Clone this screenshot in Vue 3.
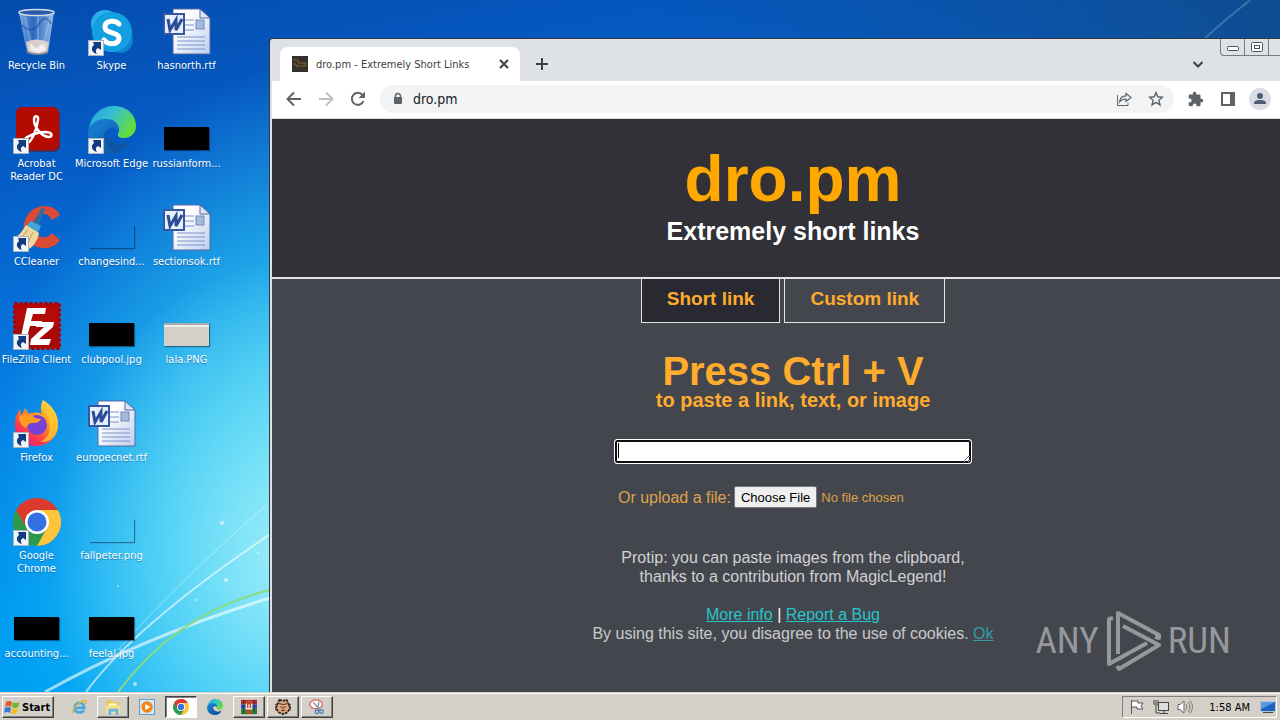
<script setup>
import { ref } from 'vue';

const shortcuts = [
  { label: 'Recycle Bin', icon: 'bin' },
  { label: 'Acrobat Reader DC', icon: 'acrobat', link: true },
  { label: 'CCleaner', icon: 'ccleaner', link: true },
  { label: 'FileZilla Client', icon: 'filezilla', link: true },
  { label: 'Firefox', icon: 'firefox', link: true },
  { label: 'Google Chrome', icon: 'chrome', link: true },
  { label: 'accounting...', icon: 'black' },
  { label: 'Skype', icon: 'skype', link: true },
  { label: 'Microsoft Edge', icon: 'edge', link: true },
  { label: 'changesind...', icon: 'clear' },
  { label: 'clubpool.jpg', icon: 'black' },
  { label: 'europecnet.rtf', icon: 'word' },
  { label: 'fallpeter.png', icon: 'clear' },
  { label: 'feelal.jpg', icon: 'black' },
  { label: 'hasnorth.rtf', icon: 'word' },
  { label: 'russianform...', icon: 'black' },
  { label: 'sectionsok.rtf', icon: 'word' },
  { label: 'lala.PNG', icon: 'beige' },
];

const tasks = [
  { icon: 'ie', name: 'Internet Explorer', state: 'flat' },
  { icon: 'folder', name: 'Explorer', state: 'raised' },
  { icon: 'media', name: 'Media Player', state: 'flat' },
  { icon: 'chrome', name: 'Chrome', state: 'pressed' },
  { icon: 'edge', name: 'Edge', state: 'flat' },
  { icon: 'rar', name: 'WinRAR', state: 'raised' },
  { icon: 'face', name: 'Application', state: 'raised' },
  { icon: 'snip', name: 'Snipping Tool', state: 'raised' },
];

const address = ref('dro.pm');
const paste = ref('');
</script>

<template>
  <div class="screen">
    <svg width="0" height="0" class="defs" aria-hidden="true">
      <defs>
        <linearGradient id="edgeTop" x1="0" y1="0" x2="1" y2="0.5">
          <stop offset="0" stop-color="#1e9de0" />
          <stop offset="0.5" stop-color="#35c1d0" />
          <stop offset="1" stop-color="#62dc3c" />
        </linearGradient>
        <linearGradient id="edgeLow" x1="0" y1="0" x2="1" y2="1">
          <stop offset="0" stop-color="#1a86d8" />
          <stop offset="1" stop-color="#0c4c9c" />
        </linearGradient>
        <linearGradient id="foxBody" x1="0.9" y1="0" x2="0.2" y2="1">
          <stop offset="0" stop-color="#fff04a" />
          <stop offset="0.4" stop-color="#ff9a1e" />
          <stop offset="0.75" stop-color="#ff3a4c" />
          <stop offset="1" stop-color="#e31587" />
        </linearGradient>
        <linearGradient id="paper" x1="0" y1="0" x2="1" y2="1">
          <stop offset="0.3" stop-color="#fff" />
          <stop offset="1" stop-color="#bccdf0" />
        </linearGradient>
        <linearGradient id="glass" x1="0" y1="0" x2="1" y2="0">
          <stop offset="0" stop-color="#9cc0ea" stop-opacity="0.85" />
          <stop offset="0.4" stop-color="#3c74c8" stop-opacity="0.7" />
          <stop offset="1" stop-color="#b4d0ee" stop-opacity="0.85" />
        </linearGradient>
        <symbol id="i-bin" viewBox="0 0 48 48">
          <path d="M6 4h35l-6 41q-10 4-21 0z" fill="url(#glass)" />
          <path d="M13 34q10-5 23 0l-2 10q-9 4-19 0z" fill="#d8cfc8" />
          <path d="M17 35l6 5 8-5 2 7-8 3-8-3z" fill="#f3efea" />
          <path d="M12 9l7 32M25 9v32M37 9l-7 30" stroke="#c4dcf5" stroke-opacity="0.3" stroke-width="2" />
          <path d="M9 17q10 10 17-1t12 0" fill="none" stroke="#184b9e" stroke-width="2" opacity="0.5" />
          <ellipse cx="23.500" cy="4.500" rx="17.500" ry="3" fill="#285ba8" stroke="#d3dbe5" stroke-width="1.500" />
          <path d="M14 43q10 5 21 0v2q-10 4-21 0z" fill="#808891" />
        </symbol>
        <symbol id="i-acrobat" viewBox="0 0 48 48">
          <rect x="3" y="3" width="44" height="43" rx="6" fill="#711218" opacity="0.6" />
          <rect x="3" y="1" width="43" height="43" rx="6" fill="#b30b00" />
          <path d="M11 37c-3-5 12-11 21-11 8 0 8 5 4 5-7 0-15-10-15-17 0-5 5-5 4 0-1 10-7 23-11 23-1 1-2 1-3 0z" fill="none" stroke="#fff" stroke-width="2.500" />
        </symbol>
        <symbol id="i-ccleaner" viewBox="0 0 48 48">
          <path d="M47 11C41-1 22-1 14 12c-8 14-1 30 14 32 8 1 15-2 19-8l-8-7c-4 6-14 6-17-1-4-9 1-19 9-18 4 0 6 3 8 6z" fill="#dd4a36" />
          <path d="M28 4l4 1-7 19-5-2z" fill="#2a6f9f" />
          <path d="M18 17l10 5-3 7-12-7z" fill="#43a6d6" />
          <path d="M13 21l13 8c-1 6-4 12-10 16-3-5-8-8-15-11 5-2 9-8 12-13z" fill="#f2d89b" />
          <path d="M15 25l-7 10M20 28l-6 13" stroke="#c79d58" stroke-width="1" />
        </symbol>
        <symbol id="i-filezilla" viewBox="0 0 48 48">
          <rect x="1.500" y="1.500" width="45" height="45" fill="#b50a0a" stroke="#a00" stroke-width="3" stroke-dasharray="3 2" />
          <rect x="3" y="24" width="42" height="21" fill="#990606" opacity="0.5" />
          <path d="M14 6h19l-1 6H20l-2 7h11l-1 5H17l-4 15H7z" fill="#fff" />
          <path d="M24 20h17l-1 5-14 12h12l-2 6H17l1-6 13-12h-8z" fill="#fff" />
        </symbol>
        <symbol id="i-firefox" viewBox="0 0 48 48">
          <path d="M30 0c8 5 16 14 15 26-1 12-10 20-22 20C10 46 1 37 2 24c0-6 2-11 5-15l1 6c3-3 4-7 4-7l4 6c4-2 9-2 13 0-2-5-1-10 1-14z" fill="url(#foxBody)" />
          <path d="M31 1c-3 8 3 12 5 19 3 12-2 19-9 22 10 1 18-6 18-17C45 12 38 6 31 1z" fill="#ffc936" opacity="0.75" />
          <circle cx="24" cy="25" r="10" fill="#7542d8" />
          <path d="M6 16c7-3 12-3 16 2l6 1c-2 4-5 4-8 4-4 0-6 2-6 5-5-1-8-6-8-12z" fill="#ff9b20" />
        </symbol>
        <symbol id="i-chrome" viewBox="0 0 48 48">
          <path d="M24 24L3.200 12A24 24 0 0 1 44.800 12z" fill="#db3a2d" />
          <path d="M24 24L44.800 12A24 24 0 0 1 24 48l-4-8z" fill="#fcc53a" />
          <path d="M24 24l10 6-10 18A24 24 0 0 1 3.200 12z" fill="#2d9b4b" />
          <path d="M24 12h20.800L34 30z" fill="#fcc53a" />
          <path d="M13 29L3.200 12l5-5L24 12z" fill="#db3a2d" />
          <circle cx="24" cy="24" r="12" fill="#fff" />
          <circle cx="24" cy="24" r="9.500" fill="#356fe0" />
        </symbol>
        <symbol id="i-skype" viewBox="0 0 48 48">
          <circle cx="17" cy="16" r="14" fill="#28b0ea" />
          <circle cx="32" cy="32" r="13" fill="#0b83d0" />
          <circle cx="24" cy="24" r="20" fill="#139fe0" />
          <path d="M31 16c-3-4-13-4-14 2-1 9 15 5 14 13-1 6-11 6-15 1" fill="none" stroke="#fff" stroke-width="5" stroke-linecap="round" />
        </symbol>
        <symbol id="i-edge" viewBox="0 0 48 48">
          <path d="M1 23C3 8 14 0 26 0c13 0 22 9 22 20 0 8-6 12-12 12-5 0-7-2-6-4 3-5 0-13-9-13C11 15 4 19 1 23z" fill="url(#edgeTop)" />
          <path d="M0 26c1-8 9-14 19-13 8 0 13 6 11 13-3-6-11-5-12 1-2 9 7 14 18 11l7-3C38 44 31 48 24 48 10 48 0 38 0 26z" fill="url(#edgeLow)" />
          <path d="M18 24c-4 7-1 18 9 22 7 1 13-4 16-11-8 6-25 3-25-11z" fill="#1056a8" />
        </symbol>
        <symbol id="i-word" viewBox="0 0 48 48">
          <path d="M10 1h27l10 9v36H10z" fill="url(#paper)" stroke="#52699e" stroke-width="1" />
          <path d="M37 1v9h10z" fill="#dce6fb" stroke="#52699e" stroke-width="1" />
          <path d="M22 12h9M22 17h9M22 22h9M14 29h28M14 33h28M14 37h28M14 41h28" stroke="#7b94c7" stroke-width="1" />
          <rect x="33" y="12" width="8" height="9" fill="#a6badd" stroke="#7389b8" />
          <rect x="1" y="6" width="20" height="20" fill="#e8effc" stroke="#3557a4" stroke-width="2" />
          <path d="M5 11l2 11 6-10v10l6-11" fill="none" stroke="#2b4a98" stroke-width="3" />
        </symbol>
        <symbol id="i-arrow" viewBox="0 0 16 16">
          <rect x="0.500" y="0.500" width="15" height="15" fill="#f2f5f8" stroke="#a9b4c0" />
          <path d="M5 2h8v8l-3-2c-2 1-3 3-1 6-5-1-7-6-3-9z" fill="#123c80" />
        </symbol>
        <symbol id="i-ie" viewBox="0 0 18 18">
          <path d="M14.500 12.500c-2 4-10.500 3.500-10.500-2.500 0-7.500 11-7.500 11 0H5" fill="none" stroke="#41a9e4" stroke-width="3" />
          <path d="M3 16C-1 15 6 6 12 3c5-3 6-1 4 3" fill="none" stroke="#e7b72c" stroke-width="1.500" />
        </symbol>
        <symbol id="i-folder" viewBox="0 0 18 18">
          <path d="M1 2l6-1 1 2h8v12H1z" fill="#e9c659" />
          <path d="M4 5h9v6H4z" fill="#fff7cf" />
          <path d="M1 7h16v9H1z" fill="#f5df8b" />
          <path d="M4 11h11v7h-3v-4H7v4H4z" fill="#68b4e5" />
        </symbol>
        <symbol id="i-media" viewBox="0 0 18 18">
          <rect x="0.500" y="0.500" width="17" height="17" fill="#d5e8f6" stroke="#5697c8" />
          <circle cx="9" cy="9" r="6.500" fill="#f28418" />
          <path d="M7 5.500l6 3.500-6 3.500z" fill="#fff" />
        </symbol>
        <symbol id="i-rar" viewBox="0 0 18 18">
          <path d="M0 1h18v5H0z" fill="#b03030" />
          <path d="M0 6h18v5H0z" fill="#354bb0" />
          <path d="M0 11h18v6H0z" fill="#25843a" />
          <path d="M3 1v16M15 1v16" stroke="#302020" stroke-dasharray="2 1" />
          <path d="M6 1h6v16H6z" fill="#b54b25" />
          <path d="M6 5v6h6V5M9 6v5" fill="none" stroke="#f7e5d5" stroke-width="1.500" />
        </symbol>
        <symbol id="i-face" viewBox="0 0 18 18">
          <path d="M5 1l4 1 4-1 2 4 2 5-3 5-5 2-5-2-3-5 2-5z" fill="#e0a77d" stroke="#2c1e14" stroke-dasharray="3 1" stroke-width="2" />
          <path d="M4 5l4 1h3l3-1M6 9h2M10 9h2M9 9v3M7 13h4M0 6l3 2M15 8l3-2M0 12h3M15 12h3" fill="none" stroke="#3a2419" />
        </symbol>
        <symbol id="i-snip" viewBox="0 0 18 18">
          <ellipse cx="8" cy="6" rx="7" ry="5" fill="#fff" stroke="#d46565" stroke-width="1.500" />
          <path d="M5 4l8 9M11 3l-1 10" stroke="#8793a0" stroke-width="1.500" />
          <circle cx="9" cy="14.500" r="2" fill="none" stroke="#4c84b4" stroke-width="1.500" />
          <circle cx="14" cy="14" r="2" fill="none" stroke="#4c84b4" stroke-width="1.500" />
        </symbol>
      </defs>
    </svg>

    <main class="desktop">
      <svg class="wallpaper" viewBox="0 0 1280 692" preserveAspectRatio="none" aria-hidden="true">
        <g fill="none" stroke="#fff">
          <path d="M45 692Q145 636 270 598" stroke-width="3" opacity="0.6" />
          <path d="M86 692Q135 625 272 533" stroke-width="2" opacity="0.6" />
          <path d="M118 650Q180 580 272 500" stroke-width="1" opacity="0.4" />
          <path d="M1205 38Q1225 20 1250 0" stroke-width="2" opacity="0.2" />
        </g>
        <path d="M118 692Q178 612 270 590" fill="none" stroke="#86dc7e" stroke-width="2" />
        <g fill="#fff" opacity="0.6">
          <circle cx="222" cy="523" r="2" />
          <circle cx="226" cy="580" r="2" />
          <circle cx="135" cy="684" r="2" />
          <circle cx="118" cy="586" r="1" />
          <circle cx="196" cy="600" r="1" />
          <circle cx="258" cy="553" r="1" />
        </g>
      </svg>

      <div class="shortcuts">
        <a v-for="item in shortcuts" :key="item.label" class="shortcut" href="#">
          <span class="shortcut-picture">
            <span v-if="['black', 'clear', 'beige'].includes(item.icon)" class="thumb" :class="item.icon"></span>
            <svg v-else class="shortcut-icon"><use :href="'#i-' + item.icon" /></svg>
            <svg v-if="item.link" class="shortcut-arrow"><use href="#i-arrow" /></svg>
          </span>
          <span class="shortcut-label">{{ item.label }}</span>
        </a>
      </div>

      <section class="window">
        <div class="window-controls">
          <button type="button" aria-label="Minimize">
            <svg width="12" height="10" viewBox="0 0 12 10"><rect x="0.500" y="4.500" width="11" height="4" rx="1" fill="#fff" stroke="#4d5058" /></svg>
          </button>
          <button type="button" aria-label="Restore">
            <svg width="12" height="10" viewBox="0 0 12 10"><rect x="0.500" y="0.500" width="11" height="9" rx="1" fill="#fff" stroke="#4d5058" /><rect x="3.500" y="3.500" width="5" height="3" fill="none" stroke="#4d5058" /></svg>
          </button>
          <button type="button" aria-label="Close"></button>
        </div>

        <div class="tab-strip">
          <div class="browser-tab">
            <svg width="16" height="16" viewBox="0 0 16 16" aria-hidden="true">
              <rect width="16" height="16" fill="#33302d" />
              <path d="M1 4h5v3h8v3M1 8h3v2h10" fill="none" stroke="#8a6425" />
            </svg>
            <span class="browser-tab-title">dro.pm - Extremely Short Links</span>
            <button class="icon-button small" type="button" aria-label="Close tab">
              <svg width="16" height="16" viewBox="0 0 16 16"><path d="M4 4l8 8M12 4l-8 8" stroke="#3c4043" stroke-width="2" /></svg>
            </button>
          </div>
          <button class="icon-button new-tab" type="button" aria-label="New tab">
            <svg width="16" height="16" viewBox="0 0 16 16"><path d="M8 2v12M2 8h12" stroke="#3c4043" stroke-width="2" /></svg>
          </button>
          <button class="icon-button tab-search" type="button" aria-label="Search tabs">
            <svg width="16" height="16" viewBox="0 0 16 16"><path d="M3.500 6L8 10.500 12.500 6" fill="none" stroke="#3c4043" stroke-width="2" /></svg>
          </button>
        </div>

        <div class="toolbar">
          <button class="icon-button" type="button" aria-label="Back">
            <svg width="20" height="20" viewBox="0 0 20 20"><path d="M17 10H4M10 3.500L3.500 10l6.500 6.500" fill="none" stroke="#5f6368" stroke-width="2" /></svg>
          </button>
          <button class="icon-button" type="button" aria-label="Forward">
            <svg width="20" height="20" viewBox="0 0 20 20"><path d="M3 10h13M10 3.500l6.500 6.500-6.500 6.500" fill="none" stroke="#bcbfc3" stroke-width="2" /></svg>
          </button>
          <button class="icon-button" type="button" aria-label="Reload">
            <svg width="20" height="20" viewBox="0 0 20 20"><path d="M15.500 12A6 6 0 1 1 14.500 6" fill="none" stroke="#5f6368" stroke-width="2" /><path d="M17 2.500V9h-6.500z" fill="#5f6368" /></svg>
          </button>
          <div class="omnibox">
            <svg width="16" height="16" viewBox="0 0 16 16" aria-hidden="true"><rect x="4" y="6" width="8" height="7" rx="1" fill="#5f6368" /><path d="M5.500 7V5a2.500 2.500 0 0 1 5 0v2" fill="none" stroke="#5f6368" stroke-width="1.500" /></svg>
            <input v-model="address" type="text" aria-label="Address" />
            <button class="icon-button" type="button" aria-label="Share">
              <svg width="16" height="16" viewBox="0 0 16 16"><path d="M1.500 4v10.500H12V12" fill="none" stroke="#5f6368" /><path d="M10 2.500L15 6.500l-5 4V8C7 8 5 9 3.500 11 4 7 6.500 5 10 4.800z" fill="none" stroke="#5f6368" stroke-width="1.200" /></svg>
            </button>
            <button class="icon-button" type="button" aria-label="Bookmark">
              <svg width="16" height="16" viewBox="0 0 16 16"><path d="M8 1.500l1.800 4.300 4.700.4-3.600 3.100 1.100 4.600L8 11.400l-4 2.500 1.100-4.600L1.500 6.200l4.700-.4z" fill="none" stroke="#5f6368" stroke-width="1.400" /></svg>
            </button>
          </div>
          <button class="icon-button" type="button" aria-label="Extensions">
            <svg width="16" height="16" viewBox="1 0 23 23"><path d="M20.500 11H19V7a2 2 0 0 0-2-2h-4V3.500a2.500 2.500 0 0 0-5 0V5H4a2 2 0 0 0-2 2v3.800h1.500a2.700 2.700 0 0 1 0 5.400H2V20a2 2 0 0 0 2 2h3.800v-1.500a2.700 2.700 0 0 1 5.400 0V22H17a2 2 0 0 0 2-2v-4h1.500a2.500 2.500 0 0 0 0-5z" fill="#5f6368" /></svg>
          </button>
          <button class="icon-button" type="button" aria-label="Side panel">
            <svg width="16" height="16" viewBox="0 0 16 16"><path d="M1 1h14v14H1zM3 3v10h7V3z" fill="#5f6368" fill-rule="evenodd" /></svg>
          </button>
          <button class="icon-button" type="button" aria-label="Profile">
            <svg width="22" height="22" viewBox="0 0 22 22"><circle cx="11" cy="11" r="11" fill="#dadde4" /><circle cx="11" cy="8" r="3" fill="#4d5d75" /><path d="M5 16v-1.500c0-3.500 12-3.500 12 0V16z" fill="#4d5d75" /></svg>
          </button>
        </div>

        <div class="page">
          <header class="page-header">
            <h1>dro.pm</h1>
            <p>Extremely short links</p>
          </header>
          <nav class="modes">
            <button class="mode active" type="button">Short link</button>
            <button class="mode" type="button">Custom link</button>
          </nav>
          <h2>Press Ctrl + V</h2>
          <p class="hint">to paste a link, text, or image</p>
          <form class="paste-form" @submit.prevent>
            <div class="paste-box">
              <textarea v-model="paste" rows="1" aria-label="Link, text, or image"></textarea>
              <span class="caret"></span>
            </div>
            <div class="upload">
              <label for="upload">Or upload a file:</label>
              <input id="upload" type="file" />
            </div>
          </form>
          <p class="protip">Protip: you can paste images from the clipboard,<br />thanks to a contribution from MagicLegend!</p>
          <footer>
            <p><a href="#">More info</a> | <a href="#">Report a Bug</a></p>
            <p class="cookies">By using this site, you disagree to the use of cookies. <a href="#">Ok</a></p>
          </footer>
        </div>
      </section>

      <div class="watermark">
        <span>ANY</span>
        <svg width="55" height="62" viewBox="0 0 55 62" aria-hidden="true">
          <g fill="none" stroke="#96989d" stroke-width="4" stroke-linejoin="round">
            <path d="M12 44V3l41 22v3l-4-1" />
            <path d="M7 8L3 9v45l38-21" />
            <path d="M17 16l36 19-40 24-2-3" />
          </g>
        </svg>
        <span>RUN</span>
      </div>
    </main>

    <footer class="taskbar">
      <button class="start" type="button">
        <svg width="17" height="16" viewBox="0 0 17 16" aria-hidden="true">
          <path d="M2 3q3-2 6 0L7 8Q4 6 1 8z" fill="#e75b26" />
          <path d="M9 3q3 2 7 0l-2 5q-3 2-6 0z" fill="#70b52c" />
          <path d="M1 9q3-2 6 0l-1 5q-3-2-6 0z" fill="#3978d2" />
          <path d="M8 9q3 2 6 0l-1 5q-3 2-6 0z" fill="#f3be23" />
        </svg>
        Start
      </button>
      <div class="tasks">
        <button v-for="task in tasks" :key="task.icon" class="task" :class="task.state" type="button" :aria-label="task.name">
          <svg width="16" height="16"><use :href="'#i-' + task.icon" /></svg>
        </button>
      </div>
      <div class="tray">
        <svg width="16" height="16" viewBox="0 0 16 16" aria-hidden="true"><path d="M2.500 1v14M3 2h6v2h5l-2 3 2 3H8V8H3" fill="#fff" stroke="#555" /></svg>
        <svg width="16" height="16" viewBox="0 0 16 16" aria-hidden="true"><rect x="5.500" y="3.500" width="10" height="8" fill="#ddd" stroke="#444" /><path d="M7 14.500h8M11 12v2M3 7v7h4M1 1v4q2 3 4 0V1M3 1v4" fill="none" stroke="#444" /></svg>
        <svg width="16" height="16" viewBox="0 0 16 16" aria-hidden="true"><path d="M1 5.500h2L7 2v12L3 10.500H1z" fill="#fff" stroke="#666" /><path d="M9 5q2 3 0 6M11 3q4 5 0 10M13 1.500q5 6 0 13" fill="none" stroke="#777" /></svg>
        <time>1:58 AM</time>
        <svg width="16" height="16" viewBox="0 0 16 16" aria-hidden="true"><rect x="0.500" y="2.500" width="15" height="10" fill="#1f63bd" stroke="#b3c3d6" /><path d="M1 3h14L1 10z" fill="#5b9be2" /><path d="M3 13h10v1H3z" fill="#444" /></svg>
      </div>
    </footer>
  </div>
</template>

<style>
body {
  margin: 0;
  overflow: hidden;
}
</style>

<style scoped>
.screen {
  display: flex;
  flex-direction: column;
  height: 100vh;
  overflow: hidden;
  font-family: Tahoma, 'DejaVu Sans Condensed', sans-serif;
  font-size: 11px;
}

.defs {
  position: absolute;
}

button {
  margin: 0;
  padding: 0;
  border: 0;
  background: none;
  font: inherit;
  color: inherit;
}

h1,
h2,
p {
  margin: 0;
}

.desktop {
  position: relative;
  flex: 1;
  min-height: 0;
  overflow: hidden;
  background:
    radial-gradient(ellipse 240px 300px at 290px 560px, rgba(180, 244, 250, 0.8), rgba(140, 236, 248, 0.5) 50%, rgba(100, 228, 248, 0) 100%),
    radial-gradient(ellipse 350px 430px at 340px 490px, rgba(90, 228, 248, 0.95), rgba(50, 205, 245, 0.6) 55%, rgba(30, 180, 245, 0) 100%),
    linear-gradient(90deg, rgba(0, 80, 160, 0) 50%, rgba(18, 70, 130, 0.8) 100%),
    linear-gradient(170deg, #054cae 0%, #055fca 22%, #0580e4 45%, #009df2 68%, #00aaf8 100%);
}

.wallpaper {
  position: absolute;
  inset: 0;
  width: 100%;
  height: 100%;
}

.shortcuts {
  position: relative;
  display: grid;
  grid-template-rows: repeat(7, 98px);
  grid-auto-columns: 75px;
  grid-auto-flow: column;
  width: max-content;
  margin-left: -1px;
}

.shortcut {
  display: flex;
  flex-direction: column;
  align-items: center;
  gap: 3px;
  padding: 8px 0 0;
  color: #fff;
  line-height: 13px;
  text-align: center;
  text-decoration: none;
  text-shadow: 0 1px 1px rgba(0, 30, 80, 0.4);
}

.shortcut-picture {
  position: relative;
  display: flex;
  justify-content: center;
  align-items: flex-end;
  width: 48px;
  height: 48px;
}

.shortcut-icon {
  width: 48px;
  height: 48px;
}

.shortcut-arrow {
  position: absolute;
  left: 0;
  bottom: 0;
  width: 16px;
  height: 16px;
}

.shortcut-label {
  max-width: 74px;
}

.thumb {
  width: 45px;
  height: 23px;
  margin-bottom: 4px;
  box-shadow: 1px 1px 1px rgba(0, 30, 60, 0.5);
}

.thumb.black {
  background: #000;
}

.thumb.beige {
  background: linear-gradient(#aaa 0 2px, #eee 2px 4px, #d4d0c8 4px);
}

.window {
  position: absolute;
  top: 38px;
  left: 269px;
  right: -37px;
  bottom: 0;
  display: flex;
  flex-direction: column;
  box-sizing: border-box;
  padding: 2px 3px 0 2px;
  border: solid #34383e;
  border-width: 1px 0 0 1px;
  border-radius: 4px 0 0 0;
  background: #dee1e6;
}

.window-controls {
  position: absolute;
  top: 0;
  right: 21px;
  display: flex;
  border: 1px solid #777b83;
  border-top: 0;
  border-radius: 0 0 4px 4px;
}

.window-controls button {
  display: flex;
  justify-content: center;
  align-items: center;
  width: 24px;
  height: 16px;
  border-right: 1px solid #777b83;
}

.window-controls button:last-child {
  width: 26px;
  border-right: 0;
}

.tab-strip {
  display: flex;
  align-items: center;
  height: 40px;
  padding: 0 106px 0 8px;
}

.browser-tab {
  display: flex;
  align-items: center;
  align-self: flex-end;
  gap: 8px;
  box-sizing: border-box;
  width: 240px;
  height: 34px;
  padding: 0 8px 0 12px;
  border-radius: 8px 8px 0 0;
  background: #fff;
  color: #3c4043;
}

.browser-tab-title {
  flex: 1;
  white-space: nowrap;
}

.icon-button {
  display: flex;
  flex: none;
  justify-content: center;
  align-items: center;
  width: 20px;
  height: 20px;
}

.icon-button svg {
  flex: none;
}

.icon-button.small {
  width: 16px;
}

.new-tab {
  margin: 6px 0 0 12px;
}

.tab-search {
  margin: 6px 0 0 auto;
}

.toolbar {
  display: flex;
  align-items: center;
  gap: 12px;
  height: 35px;
  padding: 0 44px 2px 12px;
  border-bottom: 1px solid #dadce0;
  background: #fff;
}

.omnibox {
  display: flex;
  flex: 1;
  align-items: center;
  gap: 12px;
  height: 28px;
  padding: 0 8px 0 10px;
  border-radius: 14px;
  background: #f1f3f4;
}

.omnibox input {
  flex: 1;
  min-width: 0;
  padding: 0;
  margin-left: -5px;
  border: 0;
  outline: 0;
  background: none;
  color: #202124;
  font: 14px Tahoma, 'DejaVu Sans Condensed', sans-serif;
}

.page {
  flex: 1;
  min-height: 0;
  overflow: hidden;
  background: #44464d;
  color: #ffab2e;
  font: 16px/19px 'Liberation Sans', Arial, sans-serif;
  text-align: center;
}

.page-header {
  padding: 24px 0 30px;
  border-bottom: 2px solid #e4e4e6;
  background: #323138;
}

h1 {
  color: #ffa800;
  font-size: 64px;
  line-height: 72px;
}

.page-header p {
  color: #fff;
  font-size: 25px;
  font-weight: bold;
  line-height: 32px;
}

.modes {
  display: flex;
  justify-content: center;
  gap: 4px;
}

.mode {
  padding: 8px 25px 11px;
  border: 1px solid #e4e4e6;
  border-top: 0;
  font-size: 19px;
  font-weight: bold;
  line-height: 24px;
}

.mode.active {
  background: #292a31;
}

h2 {
  margin-top: 29px;
  font-size: 40px;
  line-height: 38px;
}

.hint {
  font-size: 20px;
  font-weight: bold;
  line-height: 20px;
}

.paste-form {
  width: 358px;
  margin: 29px auto 0;
}

.paste-box {
  position: relative;
  display: flex;
}

textarea {
  flex: 1;
  box-sizing: border-box;
  height: 25px;
  margin: 0;
  padding: 1px 2px;
  overflow: hidden;
  border: 1px solid #fff;
  border-radius: 3px;
  outline: 0;
  background: #fff;
  box-shadow: inset 0 0 0 2px #101014;
  font: 14px/16px 'Liberation Sans', Arial, sans-serif;
}

.caret {
  position: absolute;
  top: 4px;
  left: 4px;
  width: 1px;
  height: 15px;
  background: #000;
}

.upload {
  display: flex;
  align-items: center;
  gap: 3px;
  height: 22px;
  margin-top: 22px;
  padding: 0 4px;
  color: #dfa149;
}

.upload input {
  flex: 1;
  min-width: 0;
  color: #dfa149;
  font: 13px 'Liberation Sans', Arial, sans-serif;
}

.upload input::file-selector-button {
  height: 22px;
  margin-right: 4px;
  padding: 1px 6px;
  border: 1px solid #767676;
  border-radius: 2px;
  background: #efefef;
  color: #000;
  font: inherit;
}

.protip {
  margin-top: 40px;
  color: #d0d1d3;
}

.page footer {
  margin-top: 19px;
  color: #fff;
}

.page a {
  color: #25c5cb;
}

.cookies {
  opacity: 0.7;
}

.watermark {
  position: absolute;
  right: 49px;
  bottom: 20px;
  display: flex;
  align-items: center;
  gap: 7px;
  color: #96989d;
  font: 37px/62px 'Roboto Condensed', 'Liberation Sans Narrow', sans-serif;
}

.taskbar {
  display: flex;
  align-items: center;
  gap: 9px;
  box-sizing: border-box;
  height: 28px;
  padding: 1px 3px 0 2px;
  border-top: 1px solid #d4d0c8;
  box-shadow: inset 0 1px 0 #fff;
  background: #d4d0c8;
}

.start,
.task.raised {
  border: 1px solid;
  border-color: #fff #404040 #404040 #fff;
  box-shadow: inset -1px -1px 0 #808080;
}

.start {
  display: flex;
  align-items: center;
  gap: 1px;
  box-sizing: border-box;
  width: 52px;
  height: 22px;
  padding-left: 1px;
  color: #000;
  font-weight: bold;
}

.tasks {
  display: flex;
  gap: 2px;
}

.task {
  display: flex;
  justify-content: center;
  align-items: center;
  box-sizing: border-box;
  width: 32px;
  height: 22px;
}

.task.pressed {
  border: 1px solid;
  border-color: #404040 #fff #fff #404040;
  box-shadow: inset 1px 1px 0 #808080;
  background: #fff;
}

.tray {
  display: flex;
  align-items: center;
  gap: 8px;
  box-sizing: border-box;
  height: 22px;
  margin-left: auto;
  padding: 0 0 0 6px;
  border: 1px solid;
  border-color: #808080 #fff #fff #808080;
  color: #000;
}

.tray time {
  margin: 0 2px 0 8px;
}
</style>
